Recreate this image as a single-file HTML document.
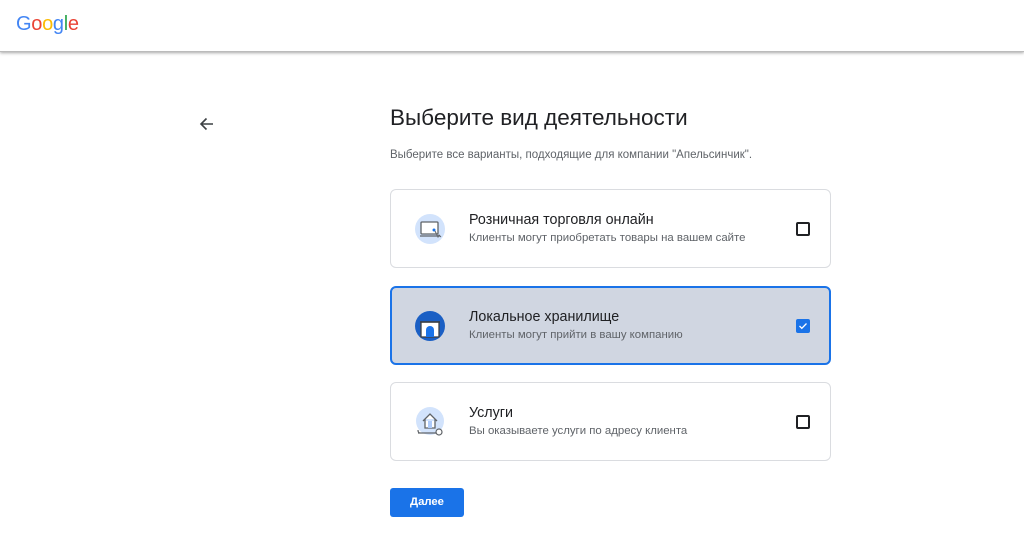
<!DOCTYPE html>
<html><head><meta charset="utf-8"><style>
*{box-sizing:border-box;margin:0;padding:0}
body{width:1024px;height:543px;background:#fff;font-family:"Liberation Sans",sans-serif;position:relative;overflow:hidden;color:#202124}
.hdr{position:absolute;left:0;top:0;width:1024px;height:52px;background:#fff;box-shadow:0 1px 3px rgba(0,0,0,.35);border-bottom:1px solid #bbb}
.logo{position:absolute;left:16px;top:13px;font-size:20px;letter-spacing:-0.3px;font-weight:400}
.h1{position:absolute;left:390px;top:105px;font-size:22.5px;color:#202124}
.sub{position:absolute;left:390px;top:149px;font-size:11.5px;color:#5f6368}
.card{position:absolute;left:390px;width:441px;height:79px;border:1px solid #dadce0;border-radius:6px;background:#fff}
.card.sel{background:#d0d6e1;border:2px solid #1a73e8;left:390px;width:441px}
.t{position:absolute;left:78px;top:22px;font-size:14.3px;color:#202124}
.d{position:absolute;left:78px;top:42px;font-size:11.4px;color:#5f6368}
.cb{position:absolute;left:405px;top:32px;width:14px;height:14px;border:2px solid #202124;border-radius:2px}
.ic{position:absolute;left:24px;top:23px}
.btn{position:absolute;left:390px;top:488px;width:74px;height:29px;background:#1a73e8;border-radius:3px;color:#fff;font-size:11.3px;font-weight:bold;text-align:center;line-height:29px}
</style></head><body>
<div class="hdr"><div class="logo"><span style="color:#4285f4">G</span><span style="color:#ea4335">o</span><span style="color:#fbbc05">o</span><span style="color:#4285f4">g</span><span style="color:#34a853">l</span><span style="color:#ea4335">e</span></div></div>
<svg style="position:absolute;left:199px;top:117px" width="15" height="14" viewBox="0 0 15 14"><path d="M14 7H2M7.5 1.5 2 7l5.5 5.5" stroke="#3c4043" stroke-width="1.6" fill="none"/></svg>
<div class="h1">Выберите вид деятельности</div>
<div class="sub">Выберите все варианты, подходящие для компании "Апельсинчик".</div>

<div class="card" style="top:189px">
<svg class="ic" width="32" height="32" viewBox="0 0 32 32"><circle cx="15" cy="16" r="15" fill="#d2e3fc"/><rect x="6" y="9" width="17" height="12" rx="1" fill="#fff" stroke="#5f6368" stroke-width="1.3"/><path d="M5 23h20" stroke="#5f6368" stroke-width="1.3"/><circle cx="19" cy="17" r="1.5" fill="#1a73e8"/><path d="M20 18l3 6 1-2 2 2" stroke="#5f6368" stroke-width="1" fill="none"/></svg>
<div class="t">Розничная торговля онлайн</div><div class="d">Клиенты могут приобретать товары на вашем сайте</div><div class="cb"></div></div>

<div class="card sel" style="top:286px">
<svg class="ic" style="left:23px;top:22px" width="32" height="32" viewBox="0 0 32 32"><circle cx="15" cy="16" r="15" fill="#1a5fc4"/><rect x="6" y="12" width="18" height="15" fill="#fff" stroke="#3c4043" stroke-width="1.3"/><path d="M5 12h20" stroke="#3c4043" stroke-width="1.5"/><path d="M11 27v-7a4 4 0 0 1 8 0v7z" fill="#1a73e8"/></svg>
<div class="t" style="top:21px;left:77px">Локальное хранилище</div><div class="d" style="top:41px;left:77px">Клиенты могут прийти в вашу компанию</div>
<div class="cb" style="left:404px;top:31px;background:#1a73e8;border-color:#1a73e8"><svg width="10" height="10" viewBox="0 0 10 10" style="position:absolute;left:0;top:0"><path d="M1.5 5l2.3 2.3L8.5 2.5" stroke="#fff" stroke-width="1.3" fill="none"/></svg></div></div>

<div class="card" style="top:382px">
<svg class="ic" width="34" height="34" viewBox="0 0 34 34"><circle cx="15" cy="15" r="14" fill="#d2e3fc"/><path d="M8 15l7-7 7 7M10 13v9h10v-9" stroke="#5f6368" stroke-width="1.3" fill="#fff"/><rect x="13" y="15" width="4" height="7" fill="#aecbfa"/><path d="M3 27h20M3 24q0 3 2 3" stroke="#5f6368" stroke-width="1.2" fill="none"/><circle cx="24" cy="26" r="3" fill="#fff" stroke="#5f6368" stroke-width="1.2"/></svg>
<div class="t">Услуги</div><div class="d">Вы оказываете услуги по адресу клиента</div><div class="cb"></div></div>

<div class="btn">Далее</div>
</body></html>
